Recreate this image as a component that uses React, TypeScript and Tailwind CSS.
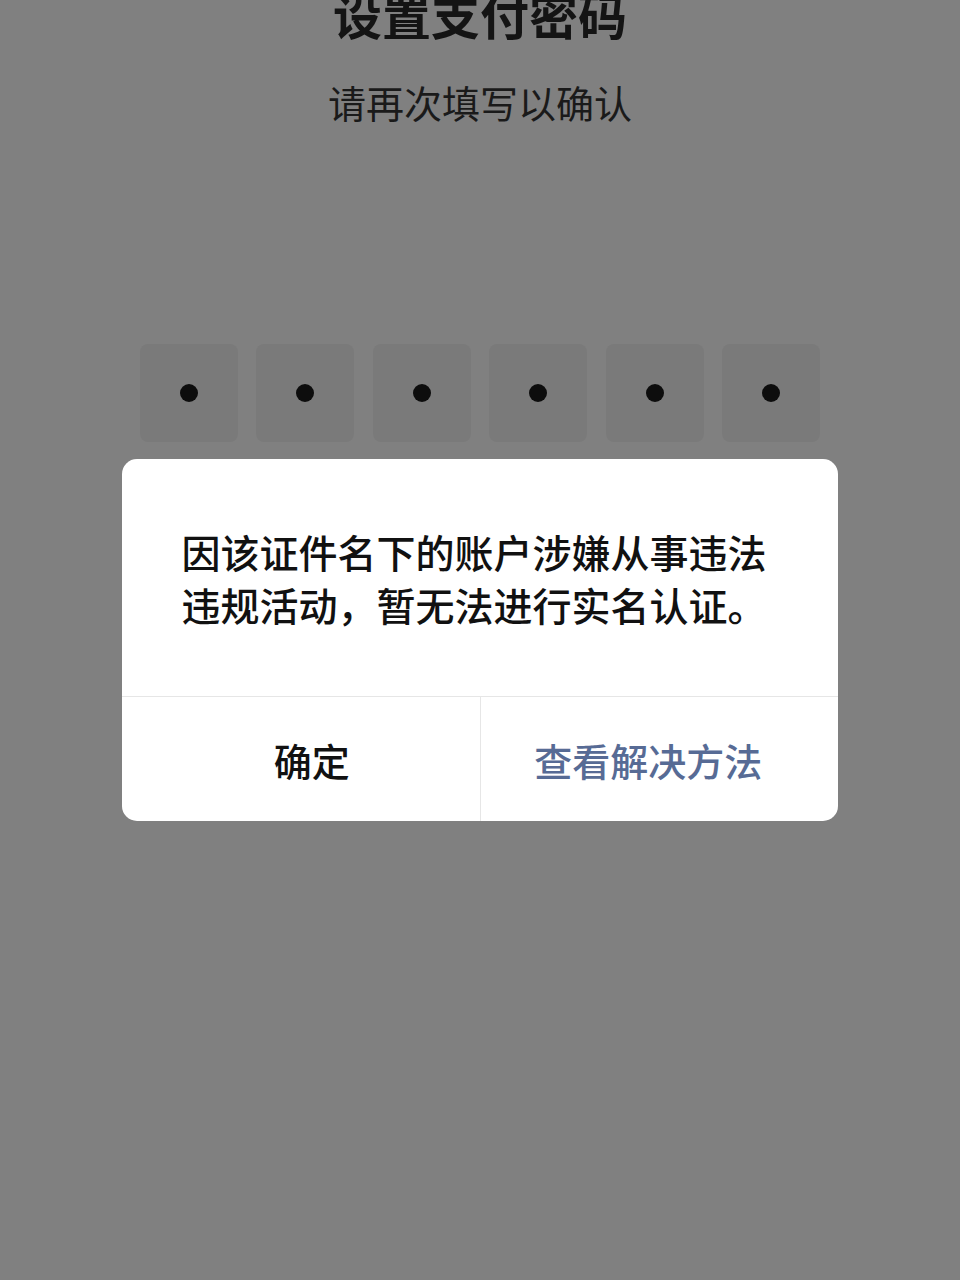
const font = { fontFamily: '"Noto Sans CJK SC", "Noto Sans", sans-serif' };

function PinBox() {
  return (
    <div className="flex h-[98px] w-[98px] items-center justify-center rounded-[8px] bg-[#7a7a7a]">
      <span className="h-[18px] w-[18px] rounded-full bg-[#0d0d0d]" />
    </div>
  );
}

export default function App() {
  return (
    <div className="relative h-[1280px] w-[960px] overflow-hidden bg-[#808080]" style={font}>
      <div className="flex flex-col items-center">
        <h1 className="mt-[-14px] text-[49px] font-bold leading-[56px] text-[#141414]">设置支付密码</h1>
        <p className="mt-[36px] text-[38px] leading-[48px] text-[#1a1a1a]">请再次填写以确认</p>
        <div className="mt-[218px] flex gap-[18.5px]">
          {[0, 1, 2, 3, 4, 5].map((i) => (
            <PinBox key={i} />
          ))}
        </div>
      </div>

      <div className="absolute left-[122px] top-[459px] w-[716px] overflow-hidden rounded-[15px] bg-white">
        <div className="pb-[65px] pl-6 pr-[36px] pt-[66px] text-center text-[39px] font-medium leading-[53px] text-[#111111]">
          因该证件名下的账户涉嫌从事违法
          <br />
          违规活动，暂无法进行实名认证。
        </div>
        <div className="flex h-[125px] border-t border-[#e6e6e6]">
          <button className="flex flex-1 items-center justify-center pl-[22px] text-[38px] font-medium text-[#111111]">确定</button>
          <div className="w-px bg-[#e6e6e6]" />
          <button className="flex flex-1 items-center justify-center pr-[22px] text-[38px] font-medium text-[#576b95]">查看解决方法</button>
        </div>
      </div>
    </div>
  );
}
